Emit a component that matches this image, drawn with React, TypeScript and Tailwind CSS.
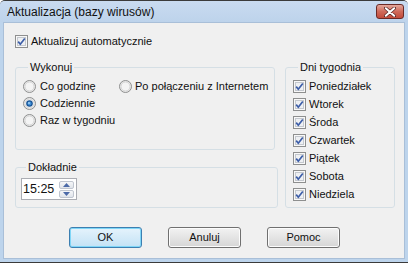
import React from "react";

function CheckBox() {
  return (
    <svg width="13" height="13" viewBox="0 0 13 13" className="shrink-0">
      <rect x="0.5" y="0.5" width="12" height="12" fill="#f3f3f3" stroke="#8e8f8f" />
      <rect x="1.5" y="1.5" width="10" height="10" fill="#e2e4e8" stroke="#f8f8f8" />
      <rect x="2.5" y="2.5" width="8" height="8" fill="#eef0f3" stroke="#c4c8ce" />
      <path d="M3.2 6.6 L5.3 9.2 L9.8 3.4" fill="none" stroke="#3d5ea8" strokeWidth="1.7" />
    </svg>
  );
}

function Radio({ checked }: { checked?: boolean }) {
  return (
    <svg width="13" height="13" viewBox="0 0 13 13" className="shrink-0">
      <circle cx="6.5" cy="6.5" r="6" fill="#e9e9e9" stroke="#8e8f8f" />
      <circle cx="6.5" cy="6.5" r="4.5" fill="#f4f4f4" stroke="#d6d6d6" />
      {checked && (
        <>
          <circle cx="6.5" cy="6.5" r="3.3" fill="#1a5596" />
          <circle cx="6.5" cy="6.5" r="2" fill="#3f8fd6" />
          <circle cx="6" cy="6" r="0.9" fill="#a9d6f7" />
        </>
      )}
    </svg>
  );
}

function Group({
  label,
  className,
  children,
}: {
  label: string;
  className: string;
  children: React.ReactNode;
}) {
  return (
    <fieldset className={"border border-[#d5dfe5] rounded-[3px] " + className}>
      <legend className="ml-[5px] px-[2px] text-[11px] leading-[13px]">{label}</legend>
      {children}
    </fieldset>
  );
}

function Button({ label, primary }: { label: string; primary?: boolean }) {
  return (
    <div
      className={
        "w-[73px] h-[21px] rounded-[3px] border flex items-center justify-center " +
        (primary
          ? "border-[#3c7fb1] bg-gradient-to-b from-[#e5f3fc] to-[#c3e2f5] shadow-[inset_0_0_0_1px_#7fd6f7]"
          : "border-[#707070] bg-gradient-to-b from-[#f2f2f2] to-[#d6d6d6] shadow-[inset_0_0_0_1px_#fcfcfc]")
      }
    >
      {label}
    </div>
  );
}

function Spinner() {
  return (
    <div className="flex flex-col w-[15px] h-[17px] gap-[1px]">
      <div className="flex-1 border border-[#c0c6d0] rounded-[2px] bg-gradient-to-b from-[#f6f7f9] to-[#e0e4ea] flex items-center justify-center">
        <svg width="7" height="4" viewBox="0 0 7 4">
          <path d="M0 4 L3.5 0 L7 4 Z" fill="#4c6aa8" />
        </svg>
      </div>
      <div className="flex-1 border border-[#c0c6d0] rounded-[2px] bg-gradient-to-b from-[#f6f7f9] to-[#e0e4ea] flex items-center justify-center">
        <svg width="7" height="4" viewBox="0 0 7 4">
          <path d="M0 0 L3.5 4 L7 0 Z" fill="#4c6aa8" />
        </svg>
      </div>
    </div>
  );
}

export default function App() {
  const days = ["Poniedziałek", "Wtorek", "Środa", "Czwartek", "Piątek", "Sobota", "Niedziela"];
  return (
    <div className="w-[408px] h-[263px] bg-[#bdd4ec] flex flex-col border-t border-b border-[#3b3b3b] rounded-t-[5px] overflow-hidden text-[11px] leading-[13px] text-[#111111] font-['Liberation_Sans',Arial,sans-serif]">
      <div className="h-[21px] shrink-0 flex items-start bg-gradient-to-b from-[#c9dbf0] to-[#bdd3eb]">
        <span className="ml-[7px] mt-[4px] text-[12px] leading-[14px]">Aktualizacja (bazy wirusów)</span>
        <div className="ml-auto mr-[4px] mt-[3px] w-[28px] h-[15px] rounded-[3px] border border-[#6b2a26] bg-gradient-to-b from-[#e3a89d] via-[#cf6a5a] to-[#c24a3a] flex items-center justify-center">
          <svg width="12" height="10" viewBox="0 0 12 10">
            <path d="M1.5 1 L10.5 9 M10.5 1 L1.5 9" stroke="#5a2a28" strokeWidth="3.4" strokeLinecap="round" />
            <path d="M1.8 1.2 L10.2 8.8 M10.2 1.2 L1.8 8.8" stroke="#ffffff" strokeWidth="2" strokeLinecap="round" />
          </svg>
        </div>
      </div>
      <div className="flex-1 mx-[3px] mb-[3px] bg-[#f0f0f0] border border-[#a9bfd8] flex flex-col">
        <div className="ml-[11px] mt-[12px] h-[13px] flex items-center gap-[3px]">
          <CheckBox />
          <span>Aktualizuj automatycznie</span>
        </div>
        <div className="mt-[13px] ml-[11px] flex">
          <div className="flex flex-col">
            <Group label="Wykonuj" className="w-[260px] h-[89px] pl-[7px]">
              <div className="mt-[4px] grid grid-cols-[96px_1fr] auto-rows-[17px]">
                <div className="flex items-center gap-[4px]">
                  <Radio />
                  <span>Co godzinę</span>
                </div>
                <div className="flex items-center gap-[3px]">
                  <Radio />
                  <span>Po połączeniu z Internetem</span>
                </div>
                <div className="flex items-center gap-[4px]">
                  <Radio checked />
                  <span>Codziennie</span>
                </div>
                <div />
                <div className="flex items-center gap-[4px]">
                  <Radio />
                  <span>Raz w tygodniu</span>
                </div>
              </div>
            </Group>
            <Group label="Dokładnie" className="mt-[11px] w-[263px] h-[47px] pl-[5px]">
              <div className="mt-[4px] w-[56px] h-[22px] bg-white border border-[#abadb3] flex items-center pl-[1px] pr-[2px]">
                <span className="text-[12.5px] leading-[16px]">15:25</span>
                <div className="ml-auto">
                  <Spinner />
                </div>
              </div>
            </Group>
          </div>
          <Group label="Dni tygodnia" className="ml-[7px] w-[110px] h-[147px] pl-[7px]">
            <div className="mt-[3px] flex flex-col">
              {days.map((d) => (
                <div key={d} className="h-[18px] flex items-center gap-[3px]">
                  <CheckBox />
                  <span>{d}</span>
                </div>
              ))}
            </div>
          </Group>
        </div>
        <div className="mt-[19px] ml-[65px] flex gap-[26px]">
          <Button label="OK" primary />
          <Button label="Anuluj" />
          <Button label="Pomoc" />
        </div>
      </div>
    </div>
  );
}
